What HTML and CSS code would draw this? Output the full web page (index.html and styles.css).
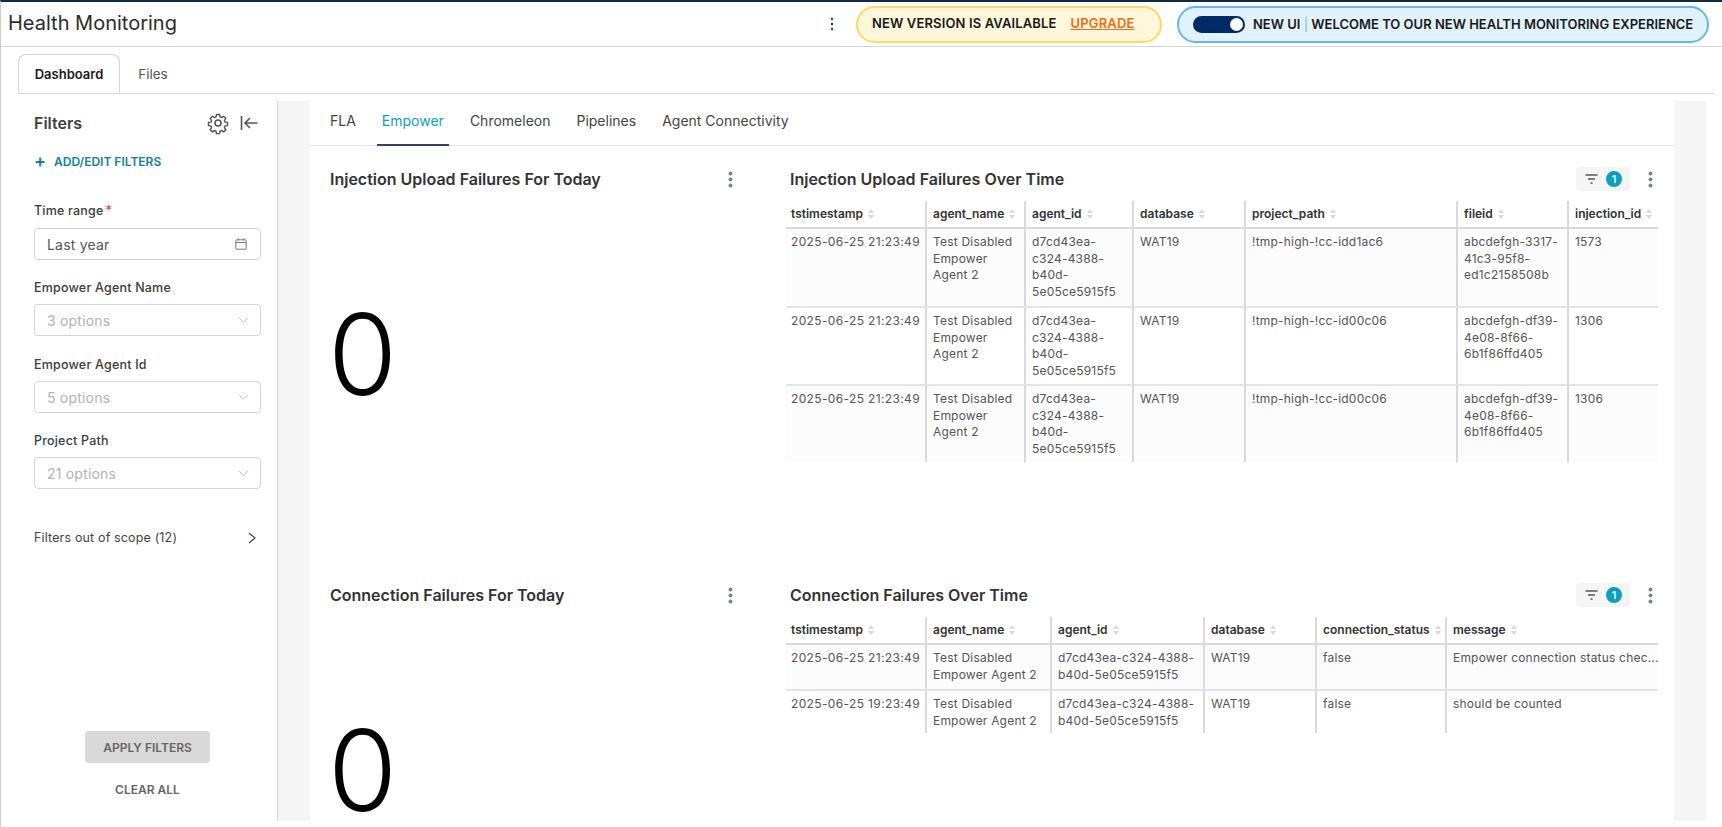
FILE: index.html
```html
<!DOCTYPE html>
<html lang="en">
<head>
<meta charset="utf-8">
<title>Health Monitoring</title>
<link rel="stylesheet" href="styles.css">
</head>
<body>
<div class="app">
  <header class="topbar">
    <h1 class="app-title">Health Monitoring</h1>
    <div class="top-actions">
      <svg class="top-kebab" width="4" height="14" viewBox="0 0 4 14"><circle cx="2" cy="2" r="1.2"/><circle cx="2" cy="7" r="1.2"/><circle cx="2" cy="12" r="1.2"/></svg>
      <div class="pill pill-yellow"><span>NEW VERSION IS AVAILABLE</span><a class="upgrade">UPGRADE</a></div>
      <div class="pill pill-blue"><span class="toggle"><span class="knob"></span></span><span>NEW UI <span class="pipe">|</span> WELCOME TO OUR NEW HEALTH MONITORING EXPERIENCE</span></div>
    </div>
  </header>

  <nav class="page-tabs">
    <div class="page-tab active">Dashboard</div>
    <div class="page-tab">Files</div>
  </nav>

  <div class="workspace">
    <aside class="filters">
      <div class="filters-head">
        <h2>Filters</h2>
        <svg class="gear" width="24" height="24" viewBox="0 0 24 24" fill="none" stroke="#555" stroke-width="1.6" stroke-linejoin="round"><path d="M10.3 2.5h3.4l.5 2.8 1.7.8 2.4-1.6 2.4 2.4-1.6 2.4.7 1.7 2.8.5v3.4l-2.8.5-.7 1.7 1.6 2.4-2.4 2.4-2.4-1.6-1.7.7-.5 2.8h-3.4l-.5-2.8-1.7-.7-2.4 1.6-2.4-2.4 1.6-2.4-.7-1.7-2.8-.5v-3.4l2.8-.5.7-1.7-1.6-2.4 2.4-2.4 2.4 1.6 1.7-.8z" transform="translate(1.2 1.2) scale(.9)"/><circle cx="12" cy="12" r="3"/></svg>
        <svg class="collapse" width="18" height="16" viewBox="0 0 18 16" fill="none" stroke="#555" stroke-width="1.6"><path d="M1.5 1v14M17.5 8H5M10 3 5 8l5 5"/></svg>
      </div>
      <div class="add-filters"><span class="plus">+</span><span>ADD/EDIT FILTERS</span></div>

      <div class="filter-field first">
        <label>Time range<span class="req">*</span></label>
        <div class="control value"><span>Last year</span>
          <svg width="12" height="12" viewBox="0 0 12 12" fill="none" stroke="#777" stroke-width="1"><rect x=".8" y="1.8" width="10.4" height="9.4" rx=".8"/><path d="M.8 4.5h10.4M3.5.5v2M8.5.5v2"/></svg>
        </div>
      </div>
      <div class="filter-field">
        <label>Empower Agent Name</label>
        <div class="control"><span>3 options</span><svg width="11" height="8" viewBox="0 0 12 8" fill="none" stroke="#b5b5b5" stroke-width="1"><path d="m1 1.5 5 5 5-5"/></svg></div>
      </div>
      <div class="filter-field">
        <label>Empower Agent Id</label>
        <div class="control"><span>5 options</span><svg width="11" height="8" viewBox="0 0 12 8" fill="none" stroke="#b5b5b5" stroke-width="1"><path d="m1 1.5 5 5 5-5"/></svg></div>
      </div>
      <div class="filter-field last">
        <label>Project Path</label>
        <div class="control"><span>21 options</span><svg width="11" height="8" viewBox="0 0 12 8" fill="none" stroke="#b5b5b5" stroke-width="1"><path d="m1 1.5 5 5 5-5"/></svg></div>
      </div>
      <div class="out-of-scope"><span>Filters out of scope (12)</span>
        <svg width="8" height="12" viewBox="0 0 8 12" fill="none" stroke="#444" stroke-width="1.2"><path d="m1 1 6 5-6 5"/></svg>
      </div>
      <div class="filter-actions">
        <button class="apply">APPLY FILTERS</button>
        <button class="clear">CLEAR ALL</button>
      </div>
    </aside>

    <main class="content">
      <nav class="sub-tabs">
        <div class="sub-tab">FLA</div>
        <div class="sub-tab active">Empower</div>
        <div class="sub-tab">Chromeleon</div>
        <div class="sub-tab">Pipelines</div>
        <div class="sub-tab">Agent Connectivity</div>
      </nav>

      <section class="dash-row">
        <div class="stat">
          <div class="chart-head"><h3>Injection Upload Failures For Today</h3>
            <svg class="kebab" width="5" height="17" viewBox="0 0 5 17"><circle cx="2.5" cy="2.5" r="2"/><circle cx="2.5" cy="8.5" r="2"/><circle cx="2.5" cy="14.5" r="2"/></svg>
          </div>
          <div class="big-number">0</div>
        </div>
        <div class="chart">
          <div class="chart-head"><h3>Injection Upload Failures Over Time</h3>
            <div class="chart-tools">
              <div class="chip"><svg width="13" height="10" viewBox="0 0 13 10" fill="none" stroke="#555" stroke-width="1.3"><path d="M.5 1h12M3 5h7M5.5 9h2"/></svg><span class="badge">1</span></div>
              <svg class="kebab" width="5" height="17" viewBox="0 0 5 17"><circle cx="2.5" cy="2.5" r="2"/><circle cx="2.5" cy="8.5" r="2"/><circle cx="2.5" cy="14.5" r="2"/></svg>
            </div>
          </div>
          <table class="data injection">
            <colgroup><col class="c1"><col class="c2"><col class="c3"><col class="c4"><col class="c5"><col class="c6"><col class="c7"></colgroup>
            <thead><tr>
              <th>tstimestamp<i class="sort"></i></th><th>agent_name<i class="sort"></i></th><th>agent_id<i class="sort"></i></th><th>database<i class="sort"></i></th><th>project_path<i class="sort"></i></th><th>fileid<i class="sort"></i></th><th>injection_id<i class="sort"></i></th>
            </tr></thead>
            <tbody>
              <tr><td>2025-06-25 21:23:49</td><td>Test Disabled Empower Agent 2</td><td>d7cd43ea-c324-4388-b40d-5e05ce5915f5</td><td>WAT19</td><td>!tmp-high-!cc-idd1ac6</td><td>abcdefgh-3317-41c3-95f8-ed1c2158508b</td><td>1573</td></tr>
              <tr><td>2025-06-25 21:23:49</td><td>Test Disabled Empower Agent 2</td><td>d7cd43ea-c324-4388-b40d-5e05ce5915f5</td><td>WAT19</td><td>!tmp-high-!cc-id00c06</td><td>abcdefgh-df39-4e08-8f66-6b1f86ffd405</td><td>1306</td></tr>
              <tr><td>2025-06-25 21:23:49</td><td>Test Disabled Empower Agent 2</td><td>d7cd43ea-c324-4388-b40d-5e05ce5915f5</td><td>WAT19</td><td>!tmp-high-!cc-id00c06</td><td>abcdefgh-df39-4e08-8f66-6b1f86ffd405</td><td>1306</td></tr>
            </tbody>
          </table>
        </div>
      </section>

      <section class="dash-row">
        <div class="stat">
          <div class="chart-head"><h3>Connection Failures For Today</h3>
            <svg class="kebab" width="5" height="17" viewBox="0 0 5 17"><circle cx="2.5" cy="2.5" r="2"/><circle cx="2.5" cy="8.5" r="2"/><circle cx="2.5" cy="14.5" r="2"/></svg>
          </div>
          <div class="big-number">0</div>
        </div>
        <div class="chart">
          <div class="chart-head"><h3>Connection Failures Over Time</h3>
            <div class="chart-tools">
              <div class="chip"><svg width="13" height="10" viewBox="0 0 13 10" fill="none" stroke="#555" stroke-width="1.3"><path d="M.5 1h12M3 5h7M5.5 9h2"/></svg><span class="badge">1</span></div>
              <svg class="kebab" width="5" height="17" viewBox="0 0 5 17"><circle cx="2.5" cy="2.5" r="2"/><circle cx="2.5" cy="8.5" r="2"/><circle cx="2.5" cy="14.5" r="2"/></svg>
            </div>
          </div>
          <table class="data connection">
            <colgroup><col class="c1"><col class="c2"><col class="c3"><col class="c4"><col class="c5"><col class="c6"></colgroup>
            <thead><tr>
              <th>tstimestamp<i class="sort"></i></th><th>agent_name<i class="sort"></i></th><th>agent_id<i class="sort"></i></th><th>database<i class="sort"></i></th><th>connection_status<i class="sort"></i></th><th>message<i class="sort"></i></th>
            </tr></thead>
            <tbody>
              <tr><td>2025-06-25 21:23:49</td><td>Test Disabled Empower Agent 2</td><td>d7cd43ea-c324-4388-b40d-5e05ce5915f5</td><td>WAT19</td><td>false</td><td class="nowrap">Empower connection status chec...</td></tr>
              <tr><td>2025-06-25 19:23:49</td><td>Test Disabled Empower Agent 2</td><td>d7cd43ea-c324-4388-b40d-5e05ce5915f5</td><td>WAT19</td><td>false</td><td>should be counted</td></tr>
            </tbody>
          </table>
        </div>
      </section>
    </main>
    <div class="gutter"></div>
  </div>
</div>
</body>
</html>
```

FILE: styles.css
```css
* { box-sizing: border-box; }
html, body { margin: 0; height: 100%; background: #fff; overflow: hidden; }
body { font-family: Inter, "Liberation Sans", sans-serif; color: #333; }
h1, h2, h3 { margin: 0; }

.app { height: 827px; border-top: 2px solid #0d2b45; border-left: 1px solid #ccc; display: flex; flex-direction: column; }

.topbar { height: 45px; flex: none; border-bottom: 1px solid #d4d4d4; display: flex; align-items: center; justify-content: space-between; padding: 0 13px 0 7px; }
.app-title { font-size: 20px; font-weight: 400; color: #2b2b2b; position: relative; top: -1px; }
.top-actions { display: flex; align-items: center; }
.top-kebab { fill: #1f3a5f; margin-right: 22px; }
.pill { height: 37px; border-radius: 19px; border: 2px solid; display: flex; align-items: center; font-size: 13px; font-weight: 600; color: #1a1a1a; white-space: nowrap; }
.pill-yellow { width: 306px; background: #fff7d9; border-color: #ffd966; padding: 0 0 3px 14px; margin-right: 15px; letter-spacing: .14px; }
.upgrade { margin-left: 14px; color: #ee6c1a; text-decoration: underline; }
.pill-blue { width: 532px; background: #e1f2fd; border-color: #62b8f6; padding-left: 14px; }
.toggle { width: 52px; height: 17px; border-radius: 9px; background: #002b66; display: flex; align-items: center; justify-content: flex-end; padding-right: 2px; margin-right: 8px; }
.knob { width: 13px; height: 13px; border-radius: 50%; background: #fff; }
.pipe { color: #62b8f6; font-weight: 400; }

.page-tabs { height: 47px; flex: none; margin: 0 8px 0 17px; border-bottom: 1px solid #d4d4d4; padding-top: 7px; display: flex; }
.page-tab { width: 102px; height: 39px; font-size: 13.5px; color: #555; display: flex; align-items: center; justify-content: center; }
.page-tab + .page-tab { width: 66px; }
.page-tab.active { font-size: 13px; font-weight: 600; color: #1a1a1a; border: 1px solid #d4d4d4; border-bottom: 1px solid #fff; border-radius: 8px 8px 0 0; background: #fff; }

.workspace { height: 720px; flex: none; margin-top: 7px; display: flex; }

.filters { width: 277px; flex: none; border-right: 1px solid #d4d4d4; padding: 0 16px 0 33px; position: relative; }
.filters-head { height: 44px; display: flex; align-items: center; }
.filters-head h2 { font-size: 16px; font-weight: 600; color: #404040; flex: 1; }
.gear { margin-right: 10px; }
.collapse { margin-right: 3px; }
.add-filters { margin-top: 8px; height: 16px; display: flex; align-items: center; font-size: 12px; font-weight: 600; color: #0f7f9c; }
.plus { width: 20px; font-size: 18px; font-weight: 600; line-height: 16px; }

.filter-field label { display: block; height: 18px; font-size: 12.5px; font-weight: 500; color: #3c3c3c; line-height: 18px; letter-spacing: .2px; }
.filter-field { margin-top: 20px; }
.filter-field.first { margin-top: 33px; margin-bottom: -1px; }
.filter-field.first label { margin-bottom: 8px; }
.filter-field:not(.first) label { margin-bottom: 7px; }
.filter-field.last { margin-top: 19px; }
.req { color: #e04355; margin-left: 2px; }
.control { height: 32px; border: 1px solid #d4d4d4; border-radius: 4px; display: flex; align-items: center; justify-content: space-between; padding: 0 11px 0 12px; font-size: 14px; color: #b3b3b3; letter-spacing: .2px; }
.control.value { color: #555; padding-right: 13px; }
.out-of-scope { margin-top: 41px; display: flex; justify-content: space-between; align-items: center; padding-right: 5px; font-size: 12.5px; color: #444; letter-spacing: .15px; }
.filter-actions { position: absolute; left: 84px; top: 630px; width: 125px; display: flex; flex-direction: column; align-items: center; }
.apply, .clear { border: 0; font-family: inherit; font-size: 12px; font-weight: 600; color: #666; white-space: nowrap; padding: 0; }
.apply { width: 125px; height: 32px; background: #d9d9d9; border-radius: 4px; }
.clear { background: none; margin-top: 18px; height: 16px; }

.content { width: 1428px; flex: none; border-left: 32px solid #f5f5f5; border-right: 32px solid #f5f5f5; overflow: hidden; }
.gutter { flex: 1; }

.sub-tabs { height: 45px; border-bottom: 1px solid #e8e8e8; display: flex; gap: 16px; padding-left: 15px; }
.sub-tab { padding: 0 5px; font-size: 14px; color: #444; height: 45px; line-height: 40px; }
.sub-tab.active { color: #0e9fc0; border-bottom: 2px solid #33426b; }

.dash-row { height: 416px; display: flex; }
.dash-row + .dash-row { height: 259px; }
.stat { width: 476px; flex: none; padding-left: 20px; display: flex; flex-direction: column; }
.chart { flex: 1; min-width: 0; padding-right: 16px; }
.chart-head { height: 55px; display: flex; align-items: center; justify-content: space-between; padding-top: 11px; }
.chart-head h3 { font-size: 16px; font-weight: 600; color: #333; white-space: nowrap; }
.stat .chart-head { padding-right: 53px; }
.chart .chart-head { padding-left: 4px; }
.kebab { fill: #78858c; }
.chart-tools { display: flex; align-items: center; }
.chip { width: 54px; height: 24px; background: #f5f5f5; border-radius: 4px; display: flex; align-items: center; padding-left: 9px; margin-right: 18px; }
.badge { width: 16px; height: 16px; margin-left: 8px; border-radius: 50%; background: #0e9fbd; color: #fff; font-size: 11px; font-weight: 500; line-height: 16px; text-align: center; }
.chart-tools .kebab { margin-right: 5px; }
.big-number { font-size: 112px; font-weight: 300; color: #000; line-height: 100px; margin: 103px 0 0 -2px; }

.data { width: 872px; table-layout: fixed; border-collapse: separate; border-spacing: 0; }
.data th, .data td { text-align: left; vertical-align: top; border-right: 2px solid #d9d9d9; padding-left: 6px; padding-right: 2px; }
.data th:first-child, .data td:first-child { padding-left: 5px; }
.data td:first-child { letter-spacing: .36px; padding-right: 0; white-space: nowrap; }
.data th:last-child, .data td:last-child { border-right: 0; }
.data th { height: 28px; font-size: 12px; font-weight: 600; color: #333; white-space: nowrap; vertical-align: middle; border-bottom: 2px solid #d9d9d9; padding-bottom: 3px; padding-right: 0; }
.data td { font-size: 12px; line-height: 16.6px; color: #555; padding-top: 5px; letter-spacing: .2px; overflow-wrap: anywhere; }
.data tbody tr + tr td { border-top: 2px solid #e4e4e4; padding-top: 5px; }
.data tbody tr:nth-child(odd) td { background: #fcfcfc; }
.data tbody tr:nth-child(even) td { background: #fff; }
.data.injection td { height: 78px; }
.data.injection tr:first-child td { height: 77px; }
.data.connection td { height: 44px; }
.nowrap { white-space: nowrap; }
.sort { display: inline-block; vertical-align: middle; width: 7px; height: 10px; margin-left: 5px; position: relative; }
.sort::before, .sort::after { content: ""; position: absolute; left: 0; border-left: 3.5px solid transparent; border-right: 3.5px solid transparent; }
.sort::before { top: 0; border-bottom: 4px solid #d9d9d9; }
.sort::after { bottom: 0; border-top: 4px solid #d9d9d9; }

.injection .c1 { width: 141px; } .injection .c2 { width: 99px; } .injection .c3 { width: 108px; } .injection .c4 { width: 112px; }
.injection .c5 { width: 212px; } .injection .c6 { width: 111px; } .injection .c7 { width: 89px; }
.connection .c1 { width: 141px; } .connection .c2 { width: 125px; } .connection .c3 { width: 153px; } .connection .c4 { width: 112px; }
.connection .c5 { width: 130px; } .connection .c6 { width: 211px; }
```
